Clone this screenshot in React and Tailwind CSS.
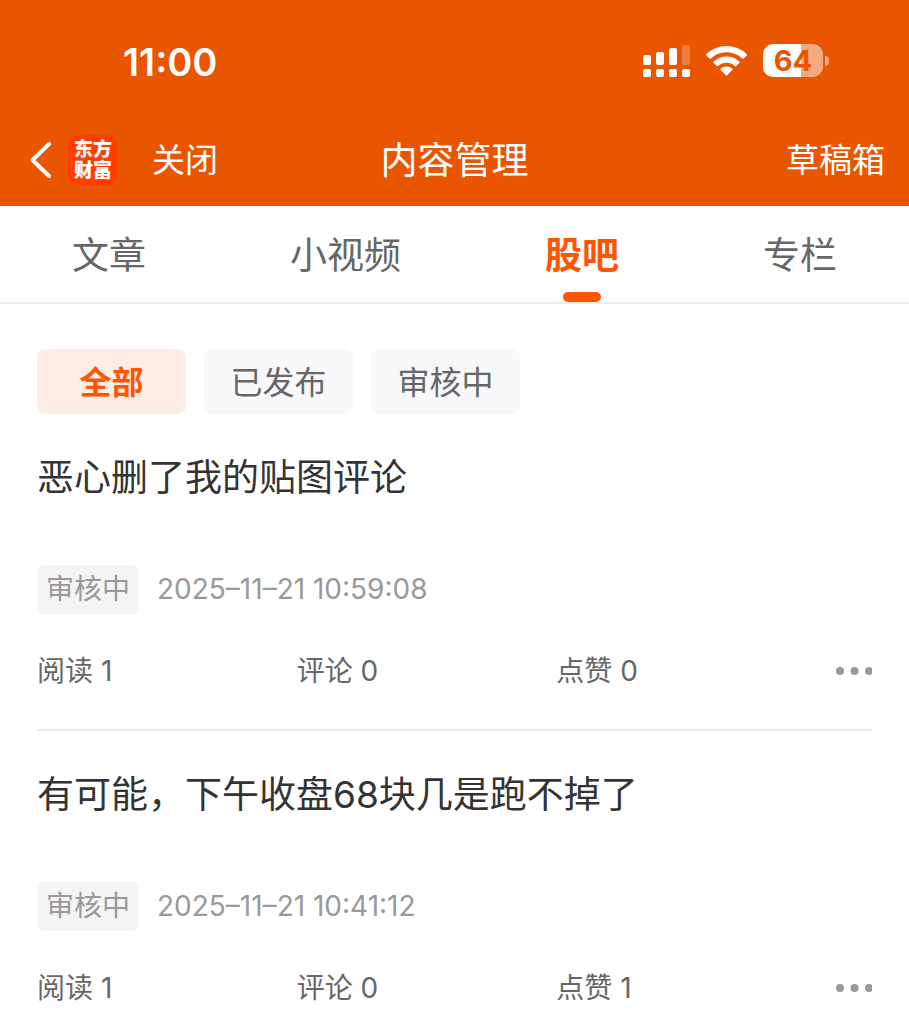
import { useState } from 'react';

const TABS = ['文章', '小视频', '股吧', '专栏'];
const FILTERS = ['全部', '已发布', '审核中'];

const POSTS = [
  { id: 1, title: '恶心删了我的贴图评论', status: '审核中', time: '2025–11–21 10:59:08', reads: 1, comments: 0, likes: 0 },
  { id: 2, title: '有可能，下午收盘68块几是跑不掉了', status: '审核中', time: '2025–11–21 10:41:12', reads: 1, comments: 0, likes: 1 },
];

export default function App(){
  const [tab, setTab] = useState('股吧');
  const [filter, setFilter] = useState('全部');

  return (
    <div className="bg-white font-['Inter','Noto_Sans_CJK_SC',sans-serif]">
      <header className="bg-[#ea5500] text-white">
        <StatusBar />
        <NavBar />
      </header>

      <nav className="flex justify-around border-b-2 border-[#ececec]">
        {TABS.map(t => (
          <button
            key={t}
            onClick={()=>setTab(t)}
            className={`relative h-24 pt-1 text-[37px] leading-[48px] ${t===tab ? 'font-bold text-[#ff5500]' : 'text-[#666666]'}`}
          >
            {t}
            {t===tab && <span className="absolute bottom-0 left-1/2 h-[10px] w-[38px] -translate-x-1/2 rounded-full bg-[#ff5500]" />}
          </button>
        ))}
      </nav>

      <main className="px-[37px] pt-[45px]">
        <div className="flex gap-[18px]">
          {FILTERS.map(f => (
            <button
              key={f}
              onClick={()=>setFilter(f)}
              className={`h-[65px] w-[149px] rounded-lg pt-[2px] text-[32px] leading-[48px] ${f===filter ? 'bg-[#ffece5] font-bold text-[#ff5500]' : 'bg-[#f8f8fb] text-[#666666]'}`}
            >
              {f}
            </button>
          ))}
        </div>
        {POSTS.map(p => <Post key={p.id} post={p} />)}
      </main>
    </div>
  )
}

function StatusBar(){
  return (
    <div className="flex h-[114px] items-center justify-between pt-[10px] pr-20 pl-[123px]">
      <span className="text-[38px] leading-[48px] font-semibold">11:00</span>
      <div className="flex items-center gap-4 pb-[3px]">
        <svg className="h-8 w-[47px]" viewBox="0 0 47 32" fill="currentColor">
          <rect x="0" y="10" width="8" height="10" rx="2" />
          <rect x="13" y="7" width="8" height="13" rx="2" />
          <rect x="26" y="3" width="8" height="17" rx="2" />
          <rect x="39" y="0" width="8" height="20" rx="2" opacity=".25" />
          <rect x="0" y="24" width="8" height="8" rx="2" />
          <rect x="13" y="24" width="8" height="8" rx="2" />
          <rect x="26" y="24" width="8" height="8" rx="2" />
          <rect x="39" y="24" width="8" height="8" rx="2" />
        </svg>
        <svg className="h-8 w-[41px]" viewBox="0 0 41 32" fill="currentColor">
          <path d="M20.500 1C12.700 1 5.600 4 .4 9a1 1 0 0 0 0 1.400l3.100 3.100a1 1 0 0 0 1.400 0A22.600 22.600 0 0 1 20.500 7.300c6 0 11.500 2.300 15.600 6.200a1 1 0 0 0 1.400 0l3.100-3.100a1 1 0 0 0 0-1.400A29 29 0 0 0 20.500 1Z" />
          <path d="M20.500 11.500c-5 0-9.500 1.900-12.900 5a1 1 0 0 0 0 1.500l3.200 3.100a1 1 0 0 0 1.400 0 12.200 12.200 0 0 1 16.600 0 1 1 0 0 0 1.400 0l3.200-3.100a1 1 0 0 0 0-1.500 19 19 0 0 0-12.900-5Z" />
          <path d="M20.500 21.500c-2.200 0-4.200.8-5.700 2.100a1 1 0 0 0 0 1.500l5 5.200a1 1 0 0 0 1.400 0l5-5.200a1 1 0 0 0 0-1.500 8.700 8.700 0 0 0-5.700-2.100Z" />
        </svg>
        <div className="flex items-center gap-[2px]">
          <span className="flex h-[33px] w-[60px] items-center justify-center rounded-[10px] bg-linear-to-r from-white from-64% to-[#f4aa80] to-64% text-[29px] leading-8 font-bold text-[#ea5500]">64</span>
          <span className="h-[10px] w-1 rounded-r-full bg-[#f4aa80]" />
        </div>
      </div>
    </div>
  )
}

function NavBar(){
  return (
    <div className="grid h-[92px] grid-cols-[1fr_auto_1fr] items-center px-6">
      <div className="flex items-center pl-1">
        <button aria-label="返回">
          <svg className="h-10 w-6" viewBox="0 0 24 40" fill="none" stroke="currentColor" strokeWidth="4" strokeLinecap="round" strokeLinejoin="round">
            <path d="M21 4L4.500 20L21 36" />
          </svg>
        </button>
        <span className="ml-4 flex size-[50px] flex-col items-center justify-center rounded-[10px] bg-[#ff3d00] text-[19px] leading-[21px] font-black">
          <span>东方</span>
          <span>财富</span>
        </span>
        <button className="ml-[34px] text-[33px] leading-[48px]">关闭</button>
      </div>
      <h1 className="pt-[2px] text-[37px] leading-[48px]">内容管理</h1>
      <button className="justify-self-end text-[33px] leading-[48px]">草稿箱</button>
    </div>
  )
}

function Post({ post }){
  return (
    <article className="border-b-2 border-[#ececec] pt-10 pb-[38px] last:border-b-0 last:pb-0">
      <h2 className="text-[37px] leading-[48px] text-[#333333]">{post.title}</h2>
      <div className="mt-[63px] flex items-center gap-[18px] text-[28px] leading-[49px] text-[#999999]">
        <span className="rounded-md bg-[#f4f4f4] px-[9px]">{post.status}</span>
        <time>{post.time}</time>
      </div>
      <div className="mt-[37px] grid grid-cols-[1fr_1fr_1fr_56px] text-[28px] leading-10 text-[#666666]">
        <span>阅读 {post.reads}</span>
        <span>评论 {post.comments}</span>
        <span>点赞 {post.likes}</span>
        <button aria-label="更多" className="flex items-center justify-end">
          <svg className="h-2 w-9" viewBox="0 0 36 8" fill="#999999">
            <circle cx="4" cy="4" r="4" />
            <circle cx="18.500" cy="4" r="4" />
            <circle cx="33" cy="4" r="4" />
          </svg>
        </button>
      </div>
    </article>
  )
}
